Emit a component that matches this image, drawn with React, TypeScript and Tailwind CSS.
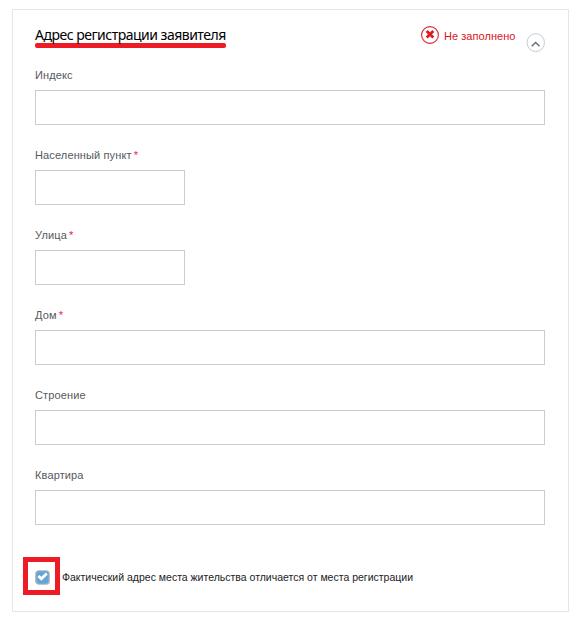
import { useState } from 'react';
import clsx from 'clsx';

interface Field {
  id: string;
  label: string;
  required?: boolean;
  short?: boolean;
}

const fields: Field[] = [
  { id: 'index', label: 'Индекс' },
  { id: 'city', label: 'Населенный пункт', required: true, short: true },
  { id: 'street', label: 'Улица', required: true, short: true },
  { id: 'house', label: 'Дом', required: true },
  { id: 'building', label: 'Строение' },
  { id: 'flat', label: 'Квартира' },
];

function ErrorIcon() {
  return (
    <svg width="18" height="18" viewBox="0 0 18 18" className="shrink-0">
      <circle cx="9" cy="9" r="8.4" fill="none" stroke="#e0242b" strokeWidth="1.1" />
      <path d="M5.7 5 L12.3 11.5 M12.3 5 L5.7 11.5" stroke="#dc1c20" strokeWidth="2.8" />
    </svg>
  );
}

function CollapseIcon() {
  return (
    <svg width="19" height="20" viewBox="0 0 19 20">
      <ellipse cx="9.8" cy="9.6" rx="8.7" ry="9" fill="none" stroke="#c8cbcf" strokeWidth="1" />
      <path d="M5.7 13.2 L9.6 9.5 L13.5 13.2" fill="none" stroke="#66707c" strokeWidth="1.5" />
    </svg>
  );
}

function CheckIcon() {
  return (
    <svg width="15" height="15" viewBox="0 0 15 15">
      <rect x="0.75" y="0.75" width="13.5" height="13.5" rx="3" fill="#65a5d3" stroke="#b5bbc1" strokeWidth="1.2" />
      <path d="M3.4 5.9 L6.4 8.7 L11.8 3.5" fill="none" stroke="#fff" strokeWidth="2.8" />
    </svg>
  );
}

export default function App() {
  const [different, setDifferent] = useState(true);

  return (
    <div className="h-[617px] w-[581px] bg-white pt-[9px] pl-3 font-['Liberation_Sans',Arial,sans-serif]">
      <section className="h-[603px] w-[557px] border border-[#e6e6e6] px-[22px]">
        {/* Header */}
        <header className="flex h-[57px] w-[510px] items-start justify-between">
          <div className="pt-4">
            <h2 className="h-[17px] w-[191px] text-[14px] leading-[18px] tracking-[-0.5px] whitespace-nowrap text-black font-['Noto_Sans',sans-serif]">
              Адрес регистрации заявителя
            </h2>
            <div className="h-[5px] w-[191px] rounded-[2px] bg-[#ed1c24]" />
          </div>
          <div className="flex">
            <div className="flex items-start gap-[5px] pt-4 text-[11px] leading-5 text-[#d8141c]">
              <ErrorIcon />
              <span className="w-[82px] tracking-[0.05px] whitespace-nowrap">Не заполнено</span>
            </div>
            <button type="button" className="mt-[23px] h-5 w-[19px]">
              <CollapseIcon />
            </button>
          </div>
        </header>

        {/* Address fields */}
        <div className="flex flex-col gap-[22px]">
          {fields.map((field) => (
            <div key={field.id}>
              <label
                htmlFor={field.id}
                className="block h-4 text-[11px] leading-4 tracking-[0.13px] text-[#55595e]"
              >
                {field.label}
                {field.required && <span className="ml-[2px] text-[#e5224b]">*</span>}
              </label>
              <input
                id={field.id}
                type="text"
                className={clsx(
                  'mt-[7px] block h-[35px] border border-[#cbced1] px-2 text-[11px] outline-none',
                  field.short ? 'w-[150px]' : 'w-[510px]',
                )}
              />
            </div>
          ))}
        </div>

        {/* Different actual address */}
        <div className="mt-8 -ml-3 flex items-center">
          <button
            type="button"
            role="checkbox"
            aria-checked={different}
            onClick={() => setDifferent(!different)}
            className="flex h-[38px] w-[37px] items-center justify-center border-5 border-[#ed1c24] pt-[2px] pl-[2px]"
          >
            {different && <CheckIcon />}
          </button>
          <span className="ml-[2px] pt-[2px] text-[10.5px] leading-4 whitespace-nowrap text-[#222]">
            Фактический адрес места жительства отличается от места регистрации
          </span>
        </div>
      </section>
    </div>
  );
}
